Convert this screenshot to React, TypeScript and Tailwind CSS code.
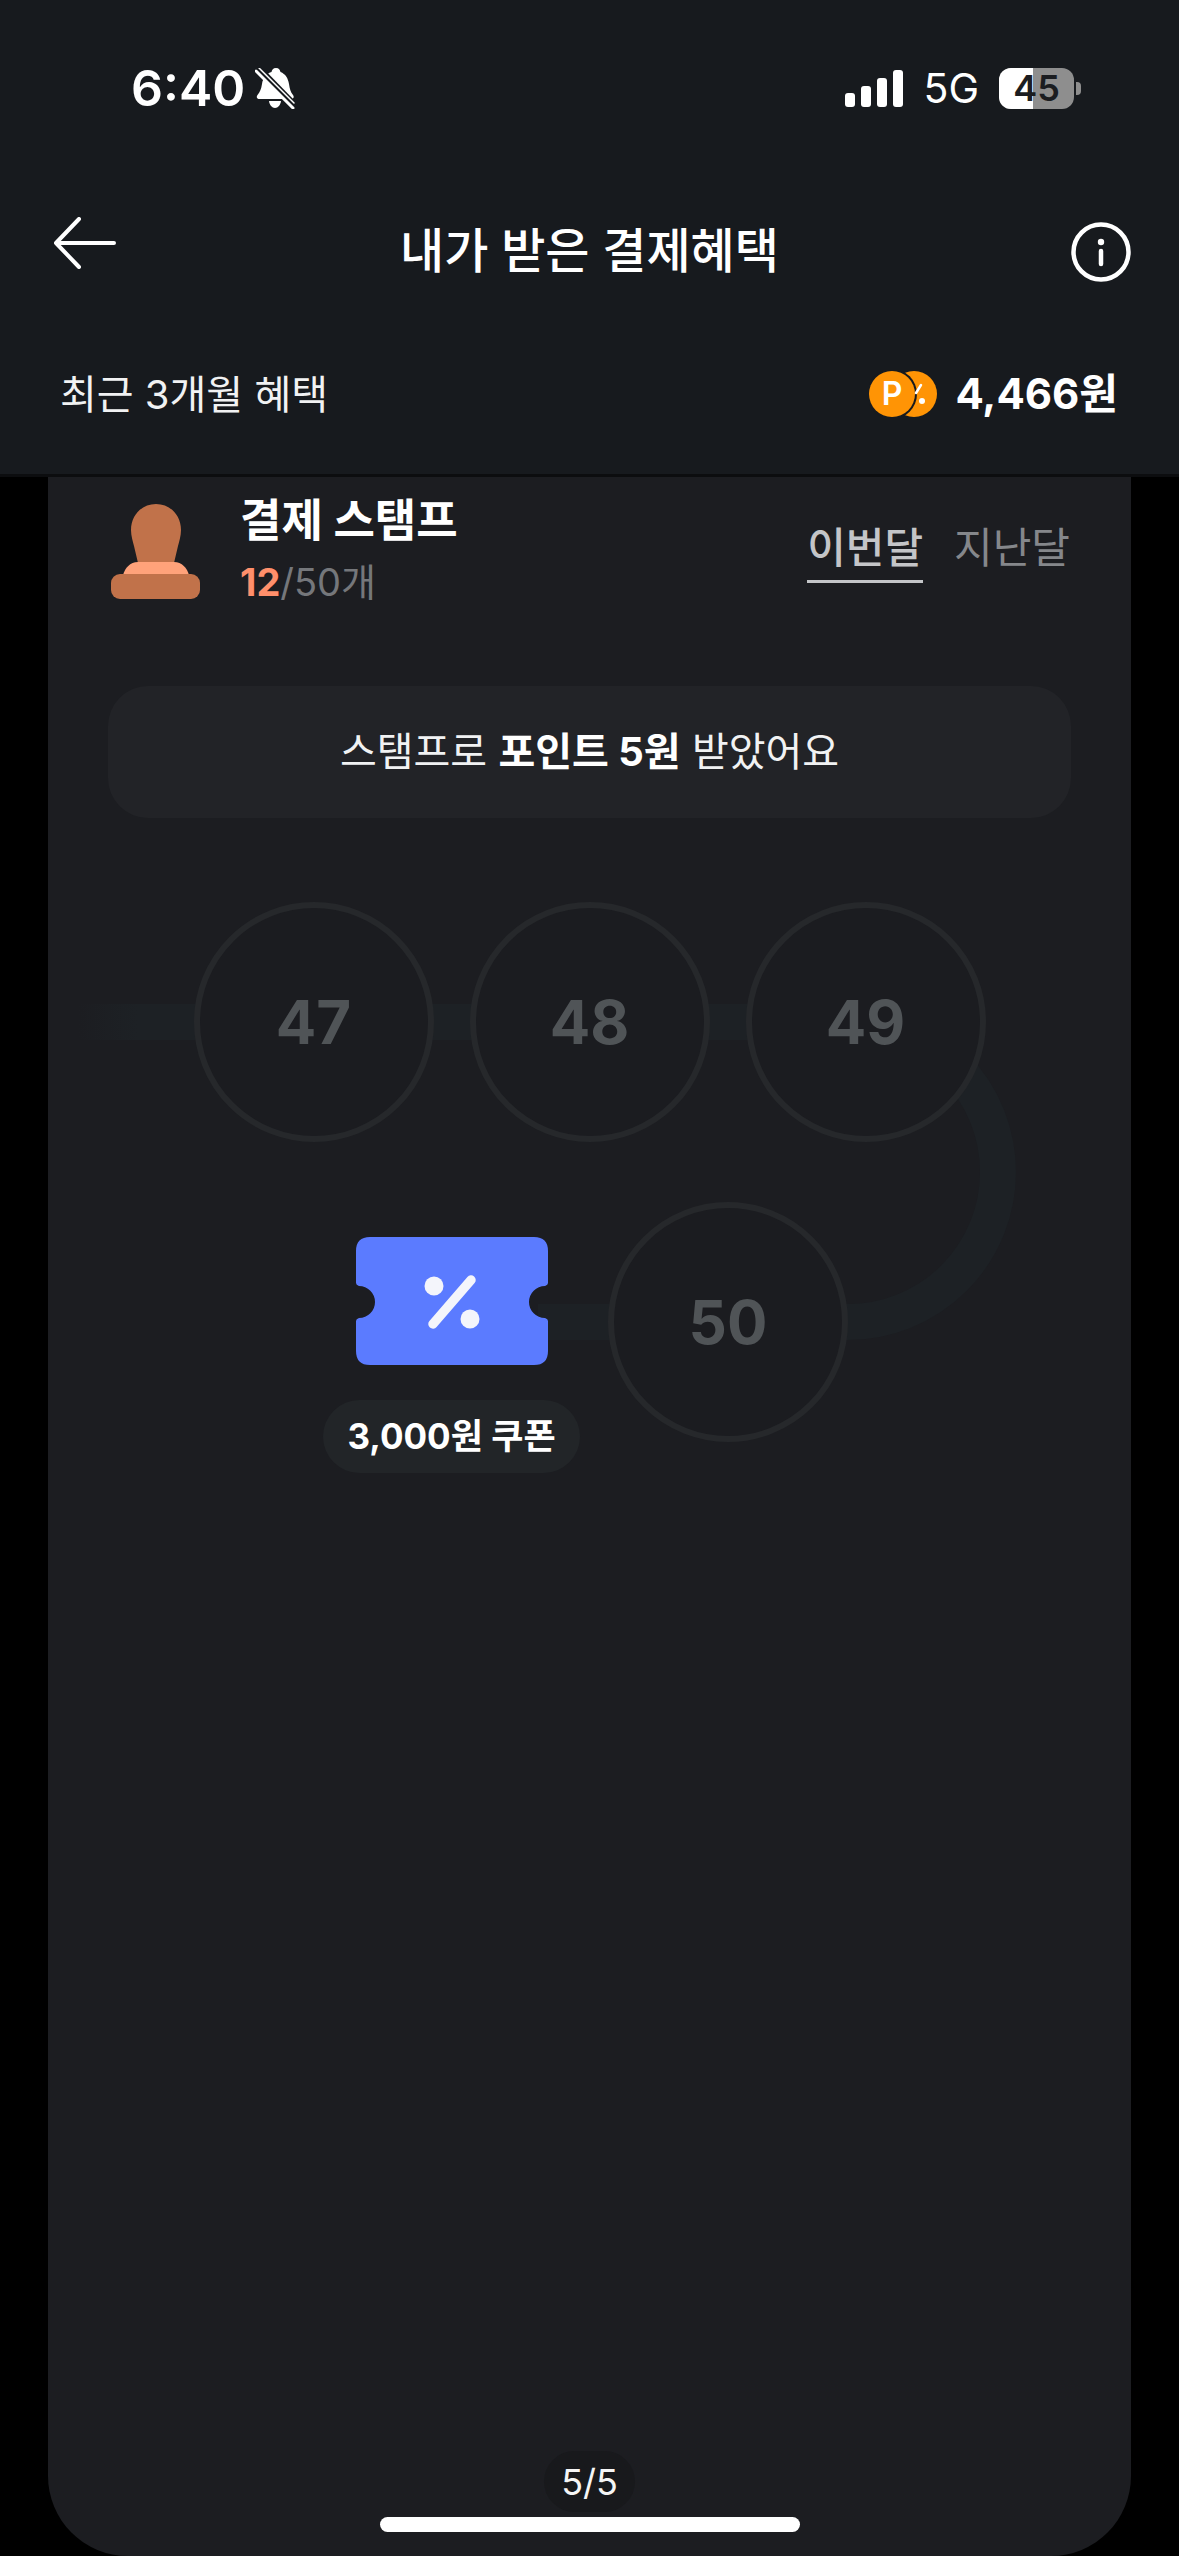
import React from "react";

const font = { fontFamily: '"Inter","Noto Sans CJK KR",sans-serif' };

function Bell() {
  return (
    <svg width="40" height="41" viewBox="0 0 40 41" className="shrink-0">
      <path d="M21 0c3 0 4 2 4.500 4 5 2 7.500 6 8.500 12 .8 5 1.500 8 4 11 1.500 2 .5 4-2 4H4.500c-2.500 0-3.500-2-2-4C5 24 6.200 21 7 16 8 10 10.500 6 16.500 4 17 2 18 0 21 0z" fill="#fff" />
      <path d="M14 33h12c-.5 4-3 7-6 7s-5.500-3-6-7z" fill="#fff" />
      <path d="M2 -1 L39 37" stroke="#171a1e" strokeWidth="7" />
      <path d="M1 3 L38 40" stroke="#fff" strokeWidth="3" strokeLinecap="round" />
      <path d="M4 0 L39 35" stroke="#fff" strokeWidth="1.500" strokeLinecap="round" />
    </svg>
  );
}

function Signal() {
  return (
    <div className="flex items-end gap-[6px] h-[37px]">
      <div className="w-[10px] h-[14px] rounded-[3px] bg-white" />
      <div className="w-[10px] h-[21px] rounded-[3px] bg-white" />
      <div className="w-[10px] h-[29px] rounded-[3px] bg-white" />
      <div className="w-[10px] h-[37px] rounded-[3px] bg-white" />
    </div>
  );
}

function Battery() {
  return (
    <div className="flex items-center gap-[2px]">
      <div className="relative w-[75px] h-[41px] rounded-[12px] overflow-hidden bg-[#8e8e8e] flex items-center justify-center">
        <div className="absolute left-0 top-0 bottom-0 w-[34px] bg-white" />
        <span className="relative text-[36px] font-semibold leading-none text-[#1b1d21]">45</span>
      </div>
      <div className="w-[5px] h-[13px] rounded-r-[4px] bg-[#8e8e8e]" />
    </div>
  );
}

function Coins() {
  return (
    <svg width="68" height="46" viewBox="0 0 68 46" className="shrink-0">
      <circle cx="45" cy="23" r="23" fill="#ff9405" />
      <circle cx="23" cy="23" r="25" fill="#171a1e" />
      <circle cx="23" cy="23" r="23" fill="#ff9405" />
      <path d="M52 14 L47 22" stroke="#fff" strokeWidth="2.500" strokeLinecap="round" />
      <circle cx="53" cy="30" r="3" fill="#fff" />
      <text x="23" y="34" textAnchor="middle" fontSize="32" fontWeight="600" fill="#fff" fontFamily="Inter, sans-serif">P</text>
    </svg>
  );
}

function Stamp() {
  return (
    <svg width="90" height="96" viewBox="0 0 90 96" className="shrink-0 mt-[27px]">
      <path d="M46 0C60 0 71 11 71 26C71 32 69 38 68 42L64 59H28L24 42C23 38 21 32 21 26C21 11 32 0 46 0Z" fill="#c1724a" />
      <path d="M28 58H64C72 58 77 64 79 71H13C15 64 20 58 28 58Z" fill="#ffa27a" />
      <rect x="1" y="70" width="89" height="25" rx="9" fill="#c1724a" />
    </svg>
  );
}

function Ticket() {
  return (
    <svg width="192" height="128" viewBox="0 0 192 128">
      <path d="M14 0H178Q192 0 192 14V46Q192 48 189 49A16 16 0 0 0 189 81Q192 82 192 84V114Q192 128 178 128H14Q0 128 0 114V84Q0 82 3 81A16 16 0 0 0 3 49Q0 48 0 46V14Q0 0 14 0Z" fill="#5b7bff" />
      <circle cx="78" cy="49" r="9.500" fill="#f4f5fb" />
      <circle cx="114" cy="82" r="9.500" fill="#f4f5fb" />
      <path d="M115 43 L77 87" stroke="#f4f5fb" strokeWidth="9.500" strokeLinecap="round" />
    </svg>
  );
}

function Circle({ n }: { n: number }) {
  return (
    <div className="relative w-[240px] h-[240px] rounded-full border-[6px] border-[#26282b] bg-[#1b1c20] flex items-center justify-center shrink-0">
      <span className="text-[60px] font-bold text-[#505457] leading-none">{n}</span>
    </div>
  );
}

export default function App() {
  return (
    <div className="w-[1179px] h-[2556px] bg-black flex flex-col overflow-hidden text-white" style={font}>
      <header className="h-[477px] shrink-0 bg-[#171a1e] border-b-[3px] border-[#0c0d0f] flex flex-col">
        <div className="h-[176px] flex items-center pl-[131px] pr-[98px] justify-between">
          <div className="flex items-center gap-[10px]">
            <span className="text-[50px] font-semibold leading-none">6:40</span>
            <Bell />
          </div>
          <div className="flex items-center">
            <Signal />
            <span className="ml-[20px] mr-[20px] text-[41px] font-normal leading-none">5G</span>
            <Battery />
          </div>
        </div>
        <div className="h-[148px] flex items-center justify-between px-[48px]">
          <div className="w-[72px] mb-[14px]">
            <svg width="72" height="52" viewBox="0 0 72 52">
              <path d="M31 2 L8 26 L31 50 M8 26 H66" fill="none" stroke="#fff" strokeWidth="4" strokeLinecap="round" strokeLinejoin="round" />
            </svg>
          </div>
          <h1 className="text-[48px] font-medium leading-none mt-[2px]">내가 받은 결제혜택</h1>
          <div className="w-[72px] flex justify-end mt-[4px]">
            <svg width="60" height="60" viewBox="0 0 60 60">
              <circle cx="30" cy="30" r="27.500" fill="none" stroke="#fff" strokeWidth="4.500" />
              <circle cx="30" cy="20" r="3.200" fill="#fff" />
              <path d="M30 29V42" stroke="#fff" strokeWidth="4.500" strokeLinecap="round" />
            </svg>
          </div>
        </div>
        <div className="h-[140px] flex items-center justify-between pl-[60px] pr-[61px]">
          <span className="text-[40px] leading-none text-[#f1f2f3] mt-[2px]">최근 3개월 혜택</span>
          <div className="flex items-center gap-[18px]">
            <Coins />
            <span className="text-[42px] font-bold leading-none">4,466원</span>
          </div>
        </div>
      </header>

      <main className="flex-1 mx-[48px] bg-[#1c1d21] rounded-b-[80px] flex flex-col relative">
        <section className="flex justify-between pl-[62px] pr-[61px]">
          <div className="flex gap-[40px]">
            <Stamp />
            <div className="mt-[14px] flex flex-col">
              <span className="text-[45px] font-bold leading-[60px]">결제 스탬프</span>
              <span className="text-[38px] leading-[56px] mt-[3px] text-[#75777b]">
                <span className="font-bold text-[#ff8f6b]">12</span>/50개
              </span>
            </div>
          </div>
          <div className="flex items-start gap-[31px] mt-[41px]">
            <span className="text-[42px] font-medium leading-[60px] pb-[2px] border-b-[3px] border-[#c4c5c8] text-[#c4c5c8]">이번달</span>
            <span className="text-[42px] leading-[60px] text-[#85878b]">지난달</span>
          </div>
        </section>

        <div className="mx-[60px] mt-[76px] h-[132px] rounded-[40px] bg-[#222327] flex items-center justify-center text-[40px] text-[#f1f2f3]">
          <span>스탬프로 <b className="font-bold text-white">포인트 5원</b> 받았어요</span>
        </div>

        <section className="relative mt-[84px]">
          <svg width="1083" height="570" viewBox="0 0 1083 570" className="absolute left-0 top-0">
            <defs>
              <linearGradient id="fade" gradientUnits="userSpaceOnUse" x1="30" y1="0" x2="90" y2="0">
                <stop offset="0" stopColor="#1d2125" stopOpacity="0" />
                <stop offset="1" stopColor="#1d2125" />
              </linearGradient>
            </defs>
            <path d="M30 120H200" stroke="url(#fade)" strokeWidth="36" fill="none" />
            <path d="M190 120H800A150 150 0 0 1 800 420H490" stroke="#1d2125" strokeWidth="36" fill="none" />
          </svg>
          <div className="relative flex justify-center gap-[36px]">
            <Circle n={47} />
            <Circle n={48} />
            <Circle n={49} />
          </div>
          <div className="relative flex items-start mt-[60px] pl-[275px] gap-[28px]">
            <div className="w-[257px] flex flex-col items-center pt-[35px]">
              <Ticket />
              <div className="mt-[35px] w-[257px] h-[73px] rounded-full bg-[#222528] flex items-center justify-center">
                <span className="text-[35px] font-bold leading-none whitespace-nowrap">3,000원 쿠폰</span>
              </div>
            </div>
            <Circle n={50} />
          </div>
        </section>

        <div className="absolute left-0 right-0 bottom-[24px] flex flex-col items-center">
          <div className="w-[91px] h-[61px] rounded-full bg-[#18191c] flex items-center justify-center text-[36px] leading-none text-[#f5f5f5]">5/5</div>
          <div className="mt-[5px] w-[420px] h-[15px] rounded-[8px] bg-white" />
        </div>
      </main>
    </div>
  );
}
